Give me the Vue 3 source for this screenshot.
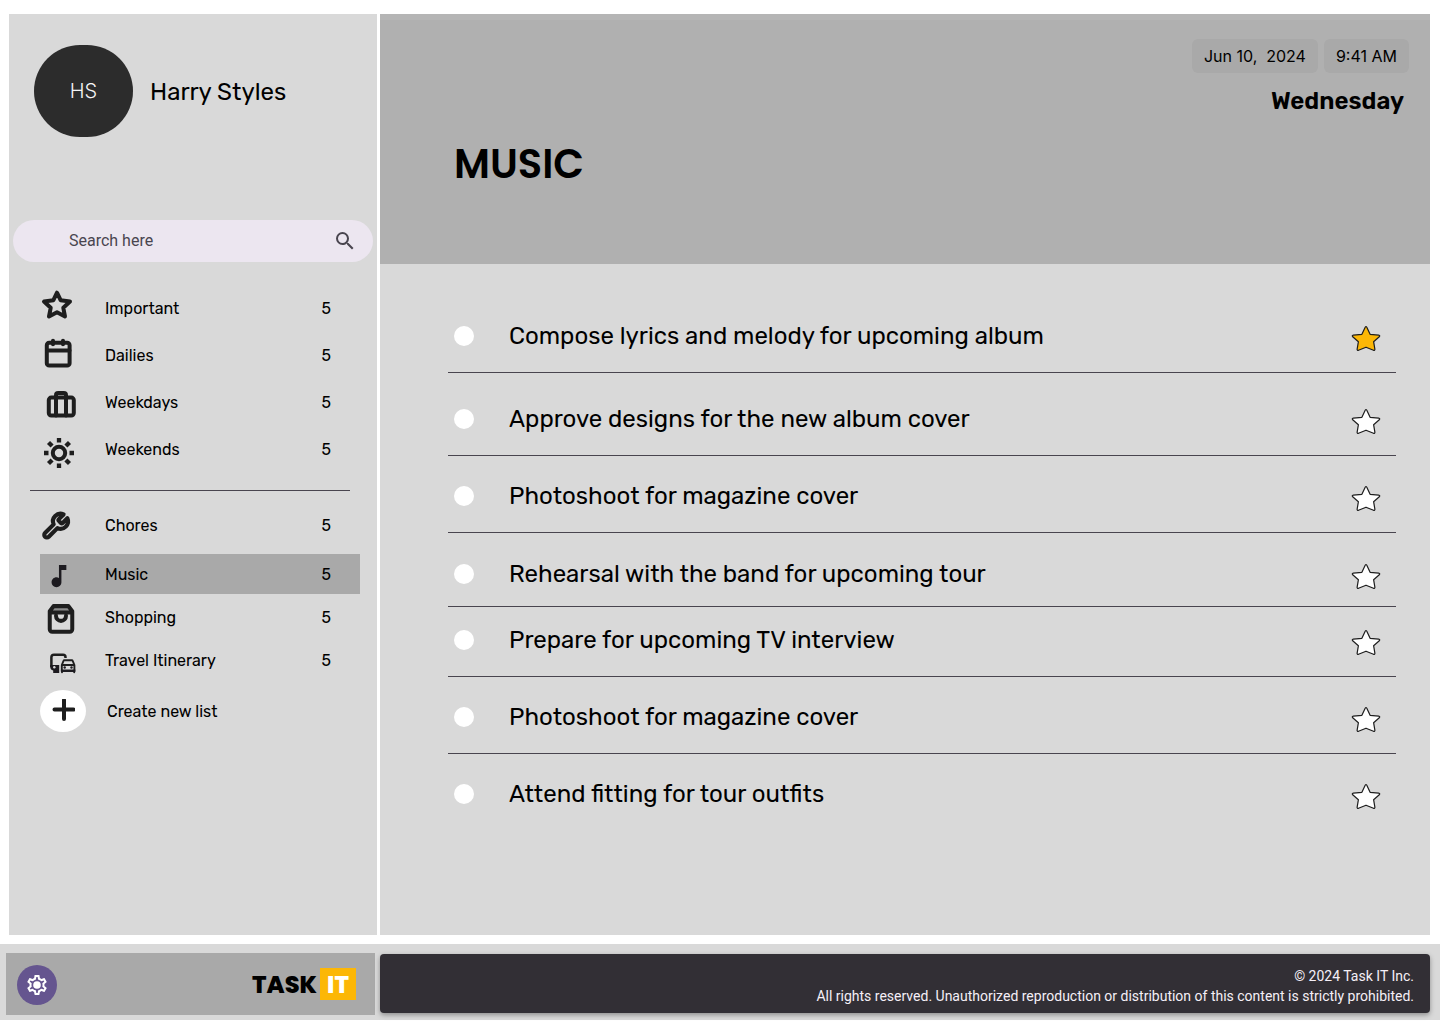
<script setup>
import { ref } from 'vue'

const query = ref('')

const smartLists = [
  { name: 'Important', icon: 'star', count: 5 },
  { name: 'Dailies', icon: 'calendar', count: 5 },
  { name: 'Weekdays', icon: 'briefcase', count: 5 },
  { name: 'Weekends', icon: 'sun', count: 5 },
]

const ownLists = [
  { name: 'Chores', icon: 'wrench', count: 5 },
  { name: 'Music', icon: 'note', count: 5, active: true },
  { name: 'Shopping', icon: 'bag', count: 5 },
  { name: 'Travel Itinerary', icon: 'commute', count: 5 },
]

const tasks = ref([
  { id: 1, title: 'Compose lyrics and melody for upcoming album', starred: true, done: false },
  { id: 2, title: 'Approve designs for the new album cover', starred: false, done: false, spacing: 'loose' },
  { id: 3, title: 'Photoshoot for magazine cover', starred: false, done: false },
  { id: 4, title: 'Rehearsal with the band for upcoming tour', starred: false, done: false, spacing: 'snug' },
  { id: 5, title: 'Prepare for upcoming TV interview', starred: false, done: false, spacing: 'tight' },
  { id: 6, title: 'Photoshoot for magazine cover', starred: false, done: false },
  { id: 7, title: 'Attend fitting for tour outfits', starred: false, done: false },
])

// Line icons, drawn on a 40 x 40 cell
const icons = {
  star: '<path d="M17 3.7 20.6 11.200 30 12.500 23.300 18.800 25 27.500 17 23.300 9 27.500 10.700 18.800 4 12.500 13.400 11.200z"/>',
  calendar: '<rect x="6.800" y="6.800" width="22.800" height="22.800" rx="2.400"/><path d="M7 14.500h22.500M13 4.700v3.500M23 4.700v3.500"/>',
  briefcase: '<rect x="8.800" y="14.600" width="25" height="18" rx="2.500"/><path d="M16 32.500V12.200q0-2.200 2.200-2.200h5.600q2.200 0 2.200 2.200v20.300"/>',
  sun: '<circle cx="19" cy="23" r="6.200"/><path stroke-linecap="butt" stroke-width="4.300" d="M19 8v4.500M19 33.500V38M4 23h4.500M29.500 23H34M8.500 12.500l3.600 3.600M25.900 29.900l3.600 3.600M8.500 33.500l3.600-3.600M25.900 16.100l3.600-3.600"/>',
  wrench: '<path transform="translate(.5 6.300) scale(1.250)" stroke-width="3.300" d="M14.700 6.300a1 1 0 0 0 0 1.400l1.600 1.600a1 1 0 0 0 1.400 0l3.770-3.770a6 6 0 0 1-7.940 7.940l-6.910 6.910a2.120 2.120 0 0 1-3-3l6.910-6.910a6 6 0 0 1 7.940-7.940l-3.760 3.760z"/>',
  note: '<path transform="translate(4.200 7.300) scale(1.230)" fill="currentColor" stroke="none" d="M12 3v10.550c-.59-.34-1.270-.55-2-.55-2.210 0-4 1.790-4 4s1.790 4 4 4 4-1.790 4-4V7h4V3h-6z"/>',
  bag: '<g transform="translate(6 6.600) scale(1.250 1.280)" stroke-width="3.200"><path fill="#8c8c8c" stroke="none" d="M6 2 3 6.500h18L18 2z"/><path d="M6 2 3 6v14a2 2 0 0 0 2 2h14a2 2 0 0 0 2-2V6l-3-4zM3 7h18M16 9.500a4 4 0 0 1-8 0"/></g>',
  commute:
    '<path stroke-width="2.500" stroke-linecap="butt" d="M25.500 18v-.8q0-2.500-2.500-2.500h-9q-2.600 0-2.600 2.600V27"/>' +
    '<path fill="currentColor" stroke="none" d="M10.200 25h9v8h-6v-2.600q-3-.6-3-3.600z"/>' +
    '<circle cx="14.300" cy="27.300" r="1.200" fill="#d9d9d9" stroke="none"/>' +
    '<path stroke-width="1.900" d="M21.800 25l1.700-4.100q.2-.6.900-.6h7.400q.7 0 .9.600l1.700 4.100v6H21.800zh12.600M22 31v1.200M34.200 31v1.200"/>' +
    '<path stroke="none" fill="currentColor" d="M20.900 29.500h14.400v2.500H20.900z"/>' +
    '<circle cx="24.700" cy="27.500" r="1.200" fill="currentColor" stroke="none"/><circle cx="31.500" cy="27.500" r="1.200" fill="currentColor" stroke="none"/>',
}
</script>

<template>
  <div class="page">
    <div class="workspace">
      <aside class="sidebar">
        <div class="profile">
          <span class="avatar">HS</span>
          <span class="profile-name">Harry Styles</span>
        </div>

        <form class="search" role="search" @submit.prevent>
          <input v-model="query" type="text" placeholder="Search here" aria-label="Search here" />
          <button type="submit" aria-label="Search">
            <svg viewBox="0 0 24 24" width="24" height="24" fill="currentColor">
              <path d="M15.500 14h-.79l-.28-.27A6.471 6.471 0 0 0 16 9.500 6.500 6.500 0 1 0 9.500 16c1.610 0 3.090-.59 4.230-1.570l.27.280v.79l5 4.990L20.490 19l-4.990-5zm-6 0C7.010 14 5 11.990 5 9.500S7.010 5 9.500 5 14 7.010 14 9.500 11.990 14 9.500 14z" />
            </svg>
          </button>
        </form>

        <nav aria-label="Task lists">
          <ul class="lists smart">
            <li v-for="item in smartLists" :key="item.name">
              <a href="#" class="list-link">
                <svg class="list-icon" viewBox="0 0 40 40" aria-hidden="true" v-html="icons[item.icon]"></svg>
                <span class="list-name">{{ item.name }}</span>
                <span>{{ item.count }}</span>
              </a>
            </li>
          </ul>
          <hr class="divider" />
          <ul class="lists own">
            <li v-for="item in ownLists" :key="item.name" :class="{ current: item.active }">
              <a href="#" class="list-link" :aria-current="item.active ? 'page' : undefined">
                <svg class="list-icon" viewBox="0 0 40 40" aria-hidden="true" v-html="icons[item.icon]"></svg>
                <span class="list-name">{{ item.name }}</span>
                <span>{{ item.count }}</span>
              </a>
            </li>
          </ul>
        </nav>

        <button type="button" class="create">
          <span class="create-badge">
            <svg viewBox="0 0 24 24" width="24" height="24" fill="none" stroke="#1e1e1e" stroke-width="4" stroke-linecap="round">
              <path d="M13 1v19M3.500 10.500h19" />
            </svg>
          </span>
          Create new list
        </button>
      </aside>

      <main class="main">
        <header class="banner">
          <div class="when">
            <div class="chips">
              <span class="chip">Jun 10,&nbsp; 2024</span>
              <span class="chip">9:41 AM</span>
            </div>
            <p class="weekday">Wednesday</p>
          </div>
          <h1>MUSIC</h1>
        </header>

        <ul class="tasks">
          <li v-for="task in tasks" :key="task.id" class="task" :class="task.spacing">
            <label class="task-label">
              <input v-model="task.done" type="checkbox" />
              <span>{{ task.title }}</span>
            </label>
            <button
              type="button"
              class="star"
              :class="{ on: task.starred }"
              :aria-pressed="task.starred"
              aria-label="Mark as important"
              @click="task.starred = !task.starred"
            >
              <svg viewBox="0 0 32 32" width="32" height="32">
                <path d="M15.200 7.200q.8-1.400 1.600 0l3.300 7.100 8.600.9q1.700.4.600 1.600l-5.700 4.900 1.300 7.600q0 1.400-1.400 1L16 27.200 8.500 30.300q-1.400.4-1.400-1l1.300-7.600-5.700-4.900q-1.100-1.200.6-1.600l8.600-.9z" />
              </svg>
            </button>
          </li>
        </ul>
      </main>
    </div>

    <footer class="footer">
      <div class="brand-bar">
        <button type="button" class="settings" aria-label="Settings">
          <svg viewBox="0 0 24 24" width="24" height="24" fill="currentColor">
            <path d="M19.430 12.980c.04-.32.070-.64.070-.98 0-.34-.03-.66-.07-.98l2.110-1.650c.19-.15.240-.42.120-.64l-2-3.460c-.09-.16-.26-.25-.44-.25-.06 0-.12.010-.17.030l-2.490 1c-.52-.4-1.080-.73-1.690-.98l-.38-2.650C14.460 2.180 14.250 2 14 2h-4c-.25 0-.46.180-.49.420l-.38 2.650c-.61.250-1.170.590-1.690.980l-2.490-1c-.06-.02-.12-.03-.18-.03-.17 0-.34.090-.43.250l-2 3.460c-.13.220-.07.490.120.640l2.110 1.650c-.04.320-.07.650-.07.980s.03.660.070.980l-2.110 1.650c-.19.150-.24.420-.12.640l2 3.460c.09.160.260.250.440.250.06 0 .12-.01.170-.03l2.490-1c.52.400 1.080.730 1.690.980l.38 2.650c.03.240.240.420.490.420h4c.25 0 .46-.18.490-.42l.38-2.650c.61-.25 1.170-.59 1.690-.98l2.490 1c.06.020.120.030.180.030.17 0 .34-.09.430-.25l2-3.460c.12-.22.070-.49-.12-.64l-2.110-1.650zm-1.980-1.710c.04.310.050.520.050.730 0 .21-.02.430-.05.730l-.14 1.130.89.700 1.080.840-.7 1.210-1.270-.51-1.040-.42-.9.680c-.43.320-.84.560-1.250.730l-1.060.430-.16 1.130-.2 1.350h-1.400l-.19-1.350-.16-1.130-1.060-.43c-.43-.18-.83-.41-1.230-.71l-.91-.7-1.060.430-1.270.510-.7-1.210 1.080-.84.890-.7-.14-1.130c-.03-.31-.05-.54-.05-.74s.02-.43.050-.73l.14-1.130-.89-.7-1.080-.84.700-1.210 1.270.510 1.040.420.900-.68c.43-.32.840-.56 1.250-.73l1.060-.43.160-1.130.200-1.350h1.390l.19 1.350.160 1.130 1.060.430c.43.180.830.410 1.230.710l.91.700 1.060-.43 1.270-.51.700 1.210-1.070.850-.89.700.140 1.130z" />
            <circle cx="12" cy="12" r="3.800" />
          </svg>
        </button>
        <a href="#" class="brand">TASK <span>IT</span></a>
      </div>
      <div class="legal">
        <p>© 2024 Task IT Inc.</p>
        <p>All rights reserved. Unauthorized reproduction or distribution of this content is strictly prohibited.</p>
      </div>
    </footer>
  </div>
</template>

<style>
body {
  margin: 0;
  background: #fff;
}
</style>

<style scoped>
* {
  box-sizing: border-box;
}

.page {
  display: flex;
  flex-direction: column;
  min-height: 100vh;
  padding-bottom: 4px;
  color: #000;
  font-family: Rubik, Inter, sans-serif;
  font-size: 16px;
}

button,
input {
  margin: 0;
  padding: 0;
  border: 0;
  background: none;
  color: inherit;
  font: inherit;
}

a {
  color: inherit;
  text-decoration: none;
}

ul,
p,
h1 {
  margin: 0;
  padding: 0;
  list-style: none;
}

svg {
  display: block;
}

.workspace {
  flex: 1;
  display: grid;
  grid-template-columns: 368px 1fr;
  gap: 3px;
  padding: 14px 10px 9px 9px;
}

/* Sidebar */
.sidebar {
  background: #d9d9d9;
}

.profile {
  display: flex;
  align-items: center;
  gap: 17px;
  padding: 31px 25px 0;
}

.avatar {
  display: flex;
  align-items: center;
  justify-content: center;
  width: 99px;
  height: 92px;
  border-radius: 46px;
  background: #2c2c2c;
  color: #f5f5f5;
  font-family: Inter, sans-serif;
  font-size: 20px;
  font-weight: 300;
}

.profile-name {
  padding-top: 2px;
  font-size: 24px;
}

.search {
  display: flex;
  align-items: center;
  height: 42px;
  margin: 83px 4px 0;
  padding: 0 16px 0 56px;
  border-radius: 21px;
  background: #ece6f0;
  color: #49454f;
}

.search input {
  flex: 1;
  min-width: 0;
  padding-bottom: 2px;
  outline: none;
  font-family: Roboto, sans-serif;
  font-size: 16px;
}

.search input::placeholder {
  color: #49454f;
  opacity: 1;
}

.lists.smart {
  padding: 23px 17px 0 31px;
}

.smart .list-link {
  height: 47px;
}

.list-link {
  display: flex;
  align-items: center;
  height: 40px;
  padding-right: 29px;
}

.list-icon {
  width: 40px;
  height: 40px;
  margin-right: 25px;
  color: #1d1b20;
  fill: none;
  stroke: #1e1e1e;
  stroke-width: 4;
  stroke-linecap: round;
  stroke-linejoin: round;
}

.list-name {
  flex: 1;
}

.divider {
  width: 320px;
  height: 1px;
  margin: 17px 0 0 21px;
  border: 0;
  background: #49454f;
}

.lists.own {
  display: grid;
  gap: 3px;
  padding: 14px 17px 0 31px;
}

.own .current {
  margin-top: 6px;
  background: #a9a9a9;
}

.create {
  display: flex;
  align-items: center;
  gap: 21px;
  margin: 10px 0 16px 31px;
}

.create-badge {
  display: flex;
  align-items: center;
  justify-content: center;
  width: 46px;
  height: 42px;
  border-radius: 50%;
  background: #fff;
}

/* Main area */
.main {
  background: #d9d9d9;
}

.banner {
  height: 250px;
  padding: 19px 21px 0 74px;
  border-top: 6px solid #b5b5b5;
  background: #b0b0b0;
}

.when {
  display: flex;
  flex-direction: column;
  align-items: flex-end;
  gap: 12px;
}

.chips {
  display: flex;
  gap: 6px;
}

.chip {
  padding: 6px 12px;
  border-radius: 6px;
  background: #a9a9a9;
  font-family: Inter, sans-serif;
  font-size: 16px;
  line-height: 22px;
}

.weekday {
  padding-right: 5px;
  font-size: 24px;
  font-weight: 600;
  line-height: 32px;
}

h1 {
  margin-top: 23px;
  font-family: Poppins, Inter, sans-serif;
  font-size: 40px;
  font-weight: 600;
  line-height: 48px;
}

.tasks {
  margin: 0 34px 0 68px;
  padding: 32px 0;
}

.task {
  display: flex;
  align-items: center;
  padding: 24px 14px 20px 6px;
  border-bottom: 1px solid #49454f;
}

.task:last-child {
  border-bottom: 0;
}

.task.loose {
  padding-top: 30px;
}

.task.snug {
  padding: 25px 14px 16px 6px;
}

.task.tight {
  padding-top: 17px;
}

.task-label {
  flex: 1;
  display: flex;
  align-items: center;
  gap: 35px;
  font-size: 24px;
  line-height: 32px;
}

.task-label input {
  appearance: none;
  flex: none;
  width: 20px;
  height: 20px;
  border-radius: 50%;
  background: #fff;
}

.task-label input:checked {
  background: #65558f;
}

.star svg {
  fill: #fff;
  stroke: #1e1e1e;
  stroke-width: 1.2;
  stroke-linejoin: round;
}

.star.on svg {
  fill: #fcb706;
}

/* Footer */
.footer {
  display: grid;
  grid-template-columns: 369px 1fr;
  align-items: start;
  gap: 5px;
  height: 76px;
  padding: 9px 10px 5px 6px;
  background: #d9d9d9;
}

.brand-bar {
  display: flex;
  align-items: center;
  justify-content: space-between;
  height: 62px;
  padding: 2px 19px 0 11px;
  background: #a9a9a9;
}

.settings {
  display: flex;
  align-items: center;
  justify-content: center;
  width: 40px;
  height: 40px;
  border-radius: 50%;
  background: #65558f;
  color: #fff;
}

.brand {
  display: flex;
  align-items: flex-start;
  gap: 3px;
  font-family: Poppins, Inter, sans-serif;
  font-size: 24px;
  font-weight: 800;
  line-height: 34px;
}

.brand span {
  width: 36px;
  height: 32px;
  background: #fcb706;
  color: #fff;
  text-align: center;
}

.legal {
  margin-top: 1px;
  padding: 12px 16px 7px;
  border-radius: 4px;
  background: #322f35;
  box-shadow: 0 2px 5px rgba(0, 0, 0, 0.35);
  color: #f5eff7;
  font-family: Roboto, sans-serif;
  font-size: 14px;
  line-height: 20px;
  text-align: right;
}
</style>
